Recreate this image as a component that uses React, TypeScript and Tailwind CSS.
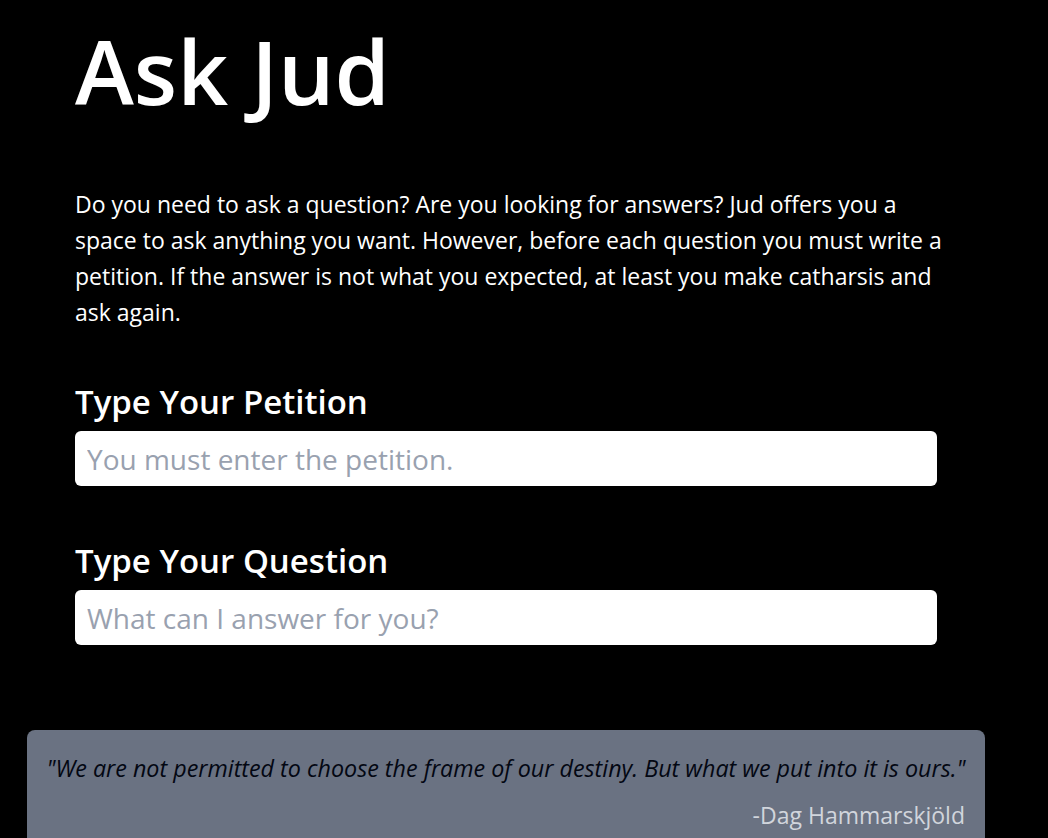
export default function App() {
  return (
    <div
      className="min-h-screen w-full bg-black text-white"
      style={{ fontFamily: "'Open Sans', 'Noto Sans', sans-serif" }}
    >
      <div className="ml-[27px] w-[958px]">
        <div className="px-12">
          <h1 className="pt-[26px] text-[89px] font-semibold leading-none">Ask Jud</h1>
          <p className="mt-[71px] w-[876px] text-[23px] leading-[36px]">
            Do you need to ask a question? Are you looking for answers? Jud offers you a space to ask anything you
            want. However, before each question you must write a petition. If the answer is not what you expected, at
            least you make catharsis and ask again.
          </p>
          <h2 className="mt-[52px] text-[33px] font-semibold leading-[40px]">Type Your Petition</h2>
          <input
            type="text"
            placeholder="You must enter the petition."
            className="mt-[9px] block h-[55px] w-full rounded-md bg-white px-3 text-[28px] text-black placeholder:text-gray-400 outline-none"
          />
          <h2 className="mt-[55px] text-[33px] font-semibold leading-[40px]">Type Your Question</h2>
          <input
            type="text"
            placeholder="What can I answer for you?"
            className="mt-[9px] block h-[55px] w-full rounded-md bg-white px-3 text-[28px] text-black placeholder:text-gray-400 outline-none"
          />
        </div>
        <div className="mt-[85px] rounded-t-lg bg-gray-500 px-4 pt-[22px] pb-6">
          <p className="text-center text-[23.3px] italic leading-[32px] text-gray-950">
            "We are not permitted to choose the frame of our destiny. But what we put into it is ours."
          </p>
          <p className="mt-[15px] pr-1 text-right text-[23px] leading-[32px] text-gray-300">-Dag Hammarskjöld</p>
        </div>
      </div>
    </div>
  );
}
